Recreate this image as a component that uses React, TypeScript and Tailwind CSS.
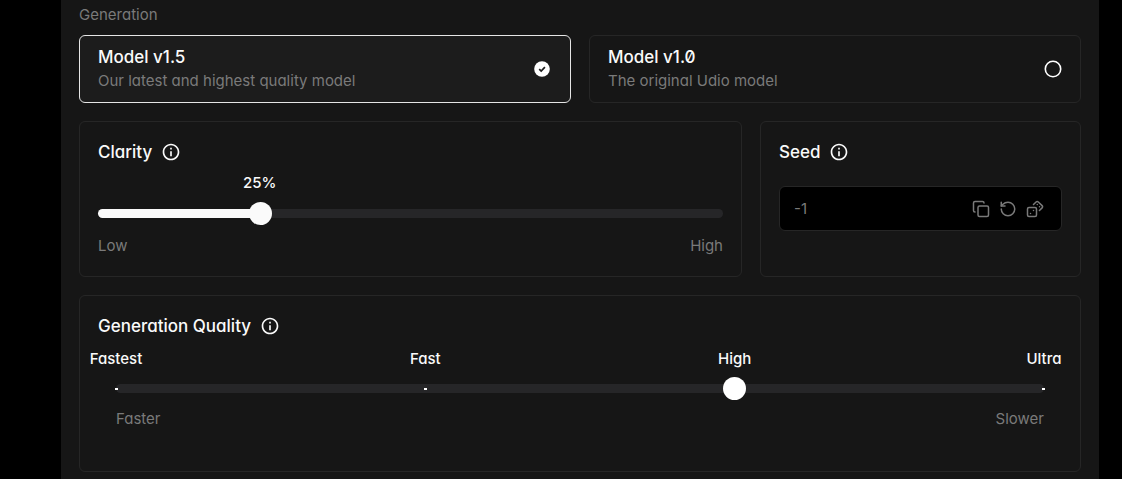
import { useState } from "react";
import type { ReactNode } from "react";
import { Copy, Dices, RotateCcw } from "lucide-react";
import { RiInformationLine } from "react-icons/ri";

const models = [
  { id: "v1.5", name: "Model v1.5", description: "Our latest and highest quality model" },
  { id: "v1.0", name: "Model v1.0", description: "The original Udio model" },
];

const qualities = ["Fastest", "Fast", "High", "Ultra"];

const thumb =
  "appearance-none cursor-pointer [&::-webkit-slider-thumb]:appearance-none [&::-webkit-slider-thumb]:size-[23px] [&::-webkit-slider-thumb]:rounded-full";

function RadioMark({ checked }: { checked: boolean }) {
  return (
    <svg viewBox="0 0 18 18" className="size-[18px] shrink-0" aria-hidden="true">
      {checked ? (
        <>
          <circle cx="8" cy="9" r="7.8" fill="#fff" />
          <path d="M5.2 9.2 7.2 11.1 10.9 7.2" fill="none" stroke="#1c1c1c" strokeWidth="1.7" />
        </>
      ) : (
        <circle cx="9" cy="9" r="7.7" fill="none" stroke="#fff" strokeWidth="1.6" />
      )}
    </svg>
  );
}

function Heading({ id, children }: { id: string; children: ReactNode }) {
  return (
    <div className="flex items-center gap-[9px]">
      <h3 id={id} className="text-[17px] leading-6 font-medium text-[#fafafa]">
        {children}
      </h3>
      <button type="button" aria-label="More information" className="text-[#fafafa]">
        <RiInformationLine className="size-5" />
      </button>
    </div>
  );
}

export default function App() {
  const [model, setModel] = useState("v1.5");
  const [clarity, setClarity] = useState(25);
  const [quality, setQuality] = useState(2);
  const [seed, setSeed] = useState("-1");

  return (
    <div className="min-h-screen bg-black pr-[23px] pl-[61px] font-['Inter',sans-serif] [font-feature-settings:'cv11','zero']">
      <main className="flex min-h-screen flex-col gap-[18px] bg-[#161616] px-[18px] pt-[5px] pb-[7px] text-[15px] leading-5 text-[#7a7a7a]">
        <fieldset>
          <legend className="mb-[10px]">Generation</legend>
          <div className="grid grid-cols-2 gap-[18px]">
            {models.map((m) => (
              <label
                key={m.id}
                className={
                  model === m.id
                    ? "flex cursor-pointer items-center justify-between rounded-md border border-[#e5e5e5] bg-[#1c1c1c] px-[18px] py-[9px]"
                    : "flex cursor-pointer items-center justify-between rounded-md border border-[#262626] px-[18px] py-[9px]"
                }
              >
                <span className="flex flex-col">
                  <span className="text-[17px] leading-6 font-medium text-[#fafafa]">{m.name}</span>
                  <span className="leading-6">{m.description}</span>
                </span>
                <input
                  type="radio"
                  name="model"
                  className="sr-only"
                  checked={model === m.id}
                  onChange={() => setModel(m.id)}
                />
                <RadioMark checked={model === m.id} />
              </label>
            ))}
          </div>
        </fieldset>

        <div className="grid grid-cols-[minmax(0,663fr)_minmax(0,321fr)] gap-[18px]">
          <section className="rounded-md border border-[#262626] px-[18px] pt-[18px] pb-5">
            <Heading id="clarity">Clarity</Heading>
            <div className="mx-[11px] mt-[9px] h-5">
              <div className="flex w-0 justify-center font-medium text-[#fafafa]" style={{ marginLeft: `${clarity}%` }}>
                <output>{clarity}%</output>
              </div>
            </div>
            <div className="mt-[9px] flex h-[23px] items-center">
              <input
                type="range"
                aria-labelledby="clarity"
                min={0}
                max={100}
                value={clarity}
                onChange={(e) => setClarity(Number(e.target.value))}
                className={`${thumb} h-[9px] w-full rounded-full [&::-webkit-slider-thumb]:bg-[#fafafa]`}
                style={{ background: `linear-gradient(to right, #fafafa ${clarity}%, #262628 ${clarity}%)` }}
              />
            </div>
            <div className="mt-[11px] flex justify-between">
              <span>Low</span>
              <span>High</span>
            </div>
          </section>

          <section className="rounded-md border border-[#262626] p-[18px]">
            <Heading id="seed">Seed</Heading>
            <div className="mt-[22px] flex h-[45px] items-center gap-[9px] rounded-md border border-[#262626] bg-black pr-[17px] pl-[14px]">
              <input
                type="text"
                aria-labelledby="seed"
                value={seed}
                onChange={(e) => setSeed(e.target.value)}
                className="min-w-0 flex-1 bg-transparent outline-none"
              />
              <button type="button" aria-label="Copy seed">
                <Copy className="size-[18px]" />
              </button>
              <button type="button" aria-label="Reset seed" onClick={() => setSeed("-1")}>
                <RotateCcw className="size-[18px]" />
              </button>
              <button
                type="button"
                aria-label="Randomize seed"
                onClick={() => setSeed(String(Math.floor(Math.random() * 1e9)))}
              >
                <Dices className="size-[18px]" />
              </button>
            </div>
          </section>
        </div>

        <section className="rounded-md border border-[#262626] px-[18px] pt-[18px] pb-[42px]">
          <Heading id="quality">Generation Quality</Heading>
          <div className="mx-[18px] mt-[11px]">
            <div className="flex justify-between font-medium text-[#fafafa]">
              {qualities.map((q) => (
                <span key={q} className="flex w-0 justify-center">
                  {q}
                </span>
              ))}
            </div>
            <div className="relative mt-2 flex h-[23px] items-center">
              <div className="flex h-[9px] w-full items-center justify-between rounded-full bg-[#262628]">
                {qualities.map((q) => (
                  <span key={q} className="flex w-0 justify-center">
                    <span className="h-[2px] w-[3px] shrink-0 bg-white" />
                  </span>
                ))}
              </div>
              <input
                type="range"
                aria-labelledby="quality"
                aria-valuetext={qualities[quality]}
                min={0}
                max={3}
                value={quality}
                onChange={(e) => setQuality(Number(e.target.value))}
                className={`${thumb} absolute inset-y-0 -left-3 w-[calc(100%+23px)] bg-transparent [&::-webkit-slider-thumb]:bg-white`}
              />
            </div>
            <div className="mt-[9px] flex justify-between">
              <span>Faster</span>
              <span>Slower</span>
            </div>
          </div>
        </section>
      </main>
    </div>
  );
}
